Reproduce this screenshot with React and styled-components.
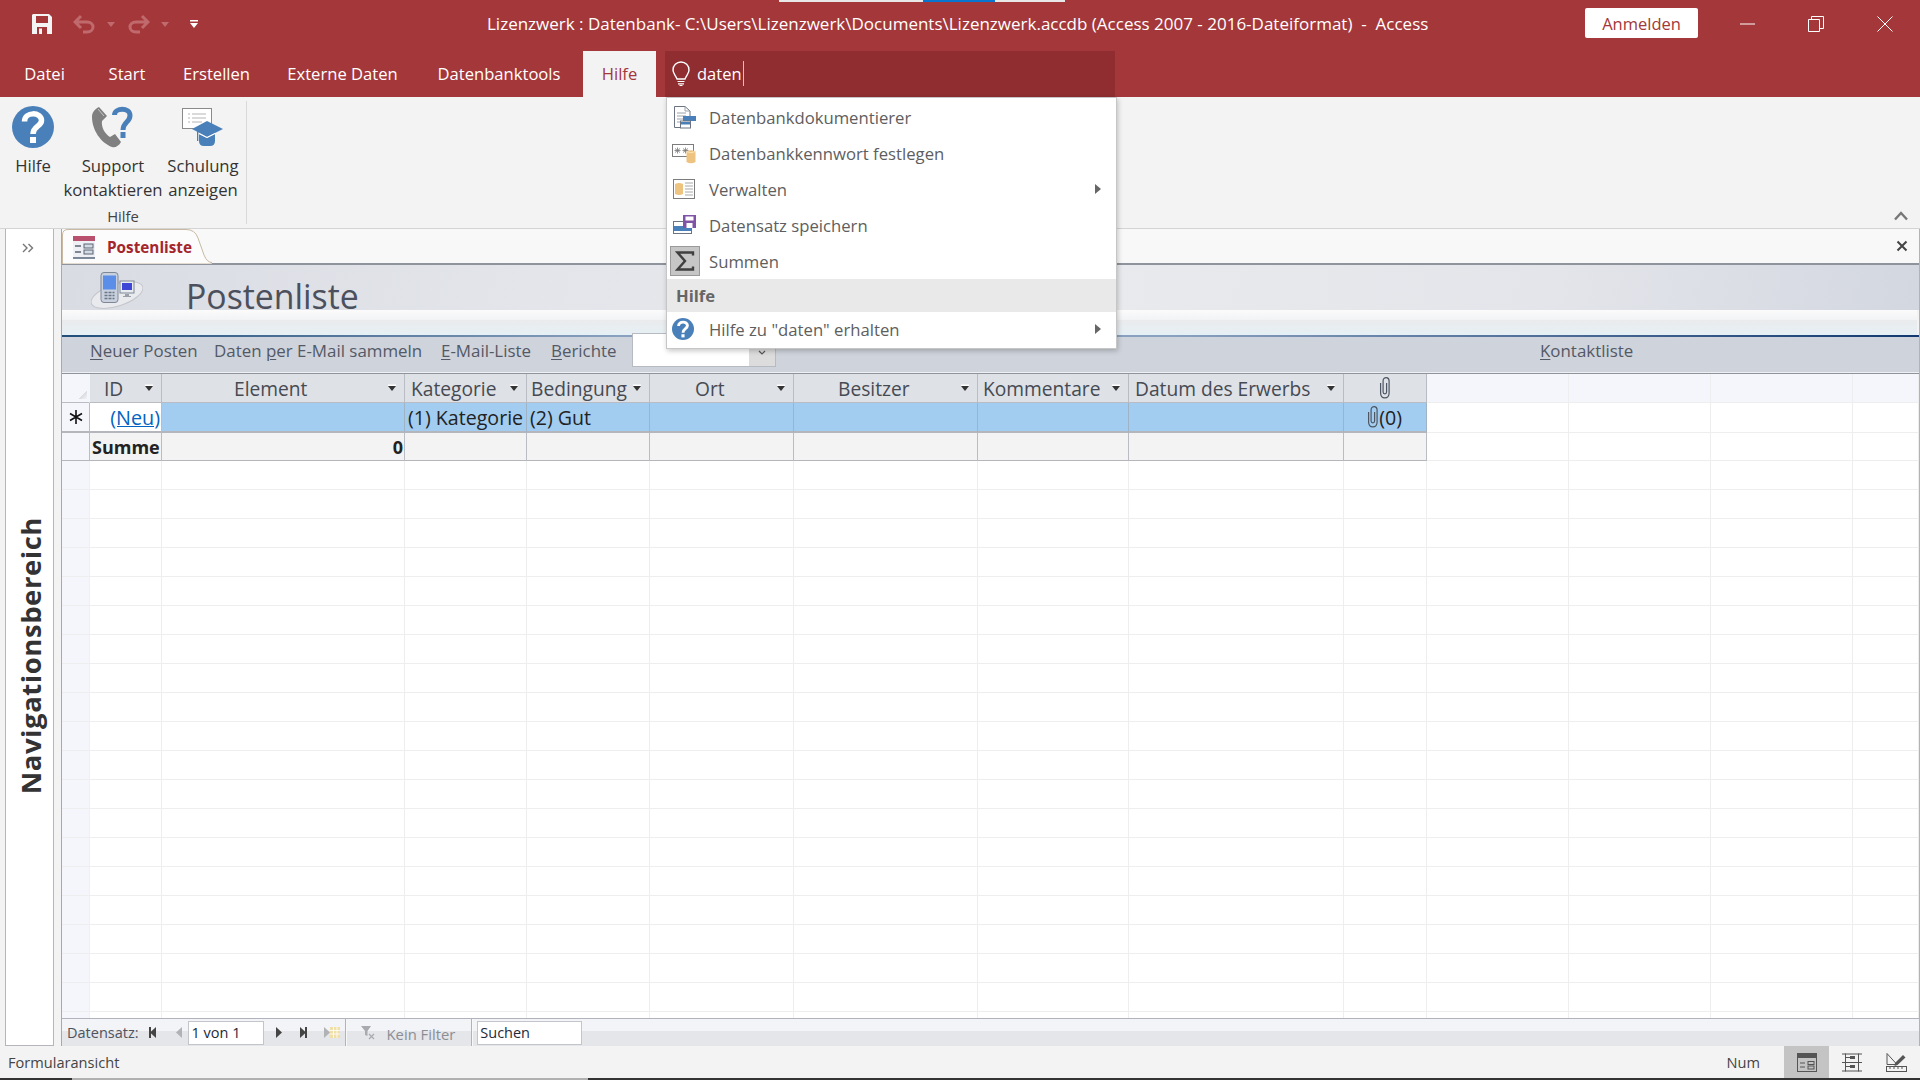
import React from "react";
import styled, { createGlobalStyle } from "styled-components";

const RED = "#a4373a";
const UI_FONT = `"Open Sans", "Noto Sans", "Liberation Sans", sans-serif`;

const GlobalStyle = createGlobalStyle`
  html, body { margin: 0; padding: 0; background: #f3f3f3; }
  * { box-sizing: border-box; }
  body { font-family: ${UI_FONT}; }
`;

const Page = styled.div`
  position: relative;
  width: 1920px;
  height: 1080px;
  overflow: hidden;
  display: flex;
  flex-direction: column;
  background: #f3f3f3;
`;

const TopStrip = styled.div`
  position: absolute;
  top: 0;
  left: 779px;
  width: 286px;
  height: 2px;
  background: linear-gradient(to right, #e8e8e8 144px, #0a74d1 144px, #0a74d1 216px, #e8e8e8 216px);
`;

/* title bar */
const TitleBar = styled.header`
  height: 48px;
  background: ${RED};
  display: flex;
  align-items: center;
  color: #fff;
  padding-left: 32px;
`;

const Qat = styled.div`
  display: flex;
  align-items: center;
  width: 455px;
  height: 100%;
`;

const Title = styled.div`
  width: 943px;
  margin-top: -2px;
  font-size: 17px;
  white-space: pre;
  color: #fff;
`;

const SignIn = styled.button`
  margin-left: 155px;
  margin-top: -2px;
  width: 113px;
  height: 30px;
  border: 0;
  border-radius: 2px;
  background: #fff;
  color: ${RED};
  font: 16.5px ${UI_FONT};
`;

const WinButton = styled.div`
  width: 68px;
  display: flex;
  justify-content: center;
  margin-left: ${p => p.$ml || 0}px;
`;

/* tabs */
const TabRow = styled.nav`
  height: 49px;
  background: ${RED};
  display: flex;
  align-items: flex-end;
  padding-left: 2px;
`;

const Tab = styled.div`
  width: ${p => p.$w}px;
  height: 46px;
  margin-left: ${p => p.$ml || 0}px;
  padding-bottom: 2px;
  display: flex;
  align-items: center;
  justify-content: center;
  font-size: 16.6px;
  color: ${p => (p.$active ? RED : "#fff")};
  background: ${p => (p.$active ? "#f3f3f3" : "transparent")};
`;

const SearchBox = styled.div`
  width: 450px;
  height: 46px;
  margin-left: 9px;
  background: #8f2d30;
  display: flex;
  align-items: center;
  padding: 0 0 2px 7px;
  color: #fff;
  font-size: 16.5px;
  gap: 7px;
`;

const Caret = styled.span`
  display: inline-block;
  width: 1px;
  height: 25px;
  background: #a9d4de;
  margin-left: -6px;
`;

/* ribbon */
const Ribbon = styled.section`
  height: 132px;
  background: #f3f3f3;
  border-bottom: 1px solid #d4d4d4;
  padding-top: 4px;
  position: relative;
`;

const RibbonGroup = styled.div`
  width: 247px;
  height: 123px;
  padding-top: 5px;
  border-right: 1px solid #d9d9d9;
  display: flex;
  flex-direction: column;
`;

const ButtonRow = styled.div`
  height: 102px;
  display: flex;
`;

const RibbonButton = styled.div`
  width: ${p => p.$w}px;
  display: flex;
  flex-direction: column;
  align-items: center;
  font-size: 16.7px;
  line-height: 24px;
  color: #333;
  text-align: center;
  white-space: nowrap;
`;

const IconSlot = styled.div`
  height: 42px;
  margin-bottom: 6px;
  display: flex;
  justify-content: center;
`;

const GroupLabel = styled.div`
  line-height: 16px;
  font-size: 14.8px;
  color: #444;
  text-align: center;
`;

const Collapse = styled.svg`
  position: absolute;
  right: 12px;
  bottom: 7px;
`;

/* search results menu */
const Menu = styled.div`
  position: absolute;
  left: 666px;
  top: 97px;
  width: 451px;
  height: 252px;
  background: #fff;
  border: 1px solid #c6c6c6;
  box-shadow: 1px 2px 5px rgba(0, 0, 0, 0.22);
  padding-top: 2px;
  display: flex;
  flex-direction: column;
  z-index: 5;
`;

const MenuItem = styled.div`
  height: 36px;
  flex: none;
  display: flex;
  align-items: center;
  padding: 0 15px 2px 5px;
  color: #5e5e5e;
  font-size: 16.7px;
`;

const MenuIcon = styled.div`
  width: 37px;
  display: flex;
  align-items: center;
`;

const SigmaBox = styled.div`
  width: 30px;
  height: 30px;
  margin-left: -2px;
  background: #c6c6c6;
  border: 1px solid #9a9a9a;
  display: flex;
  align-items: center;
  justify-content: center;
`;

const MenuArrow = styled.span`
  margin-left: auto;
  width: 0;
  height: 0;
  border-left: 6px solid #666;
  border-top: 5.5px solid transparent;
  border-bottom: 5.5px solid transparent;
`;

const MenuHeading = styled.div`
  height: 33px;
  flex: none;
  margin-top: -1px;
  background: #e9e9e9;
  display: flex;
  align-items: center;
  padding-left: 9px;
  font-size: 16.6px;
  font-weight: 700;
  color: #666;
`;

/* workspace */
const Workspace = styled.main`
  flex: 1;
  min-height: 0;
  display: flex;
`;

const NavPane = styled.aside`
  width: 49px;
  margin-left: 5px;
  background: #fff;
  border: 1px solid #b4b6bc;
  border-top: 0;
  display: flex;
  flex-direction: column;
  align-items: center;
  padding-top: 14px;
`;

const NavChevron = styled.svg`
  margin-right: 3px;
  flex: none;
`;

const NavLabel = styled.div`
  writing-mode: vertical-rl;
  transform: rotate(180deg);
  margin-top: 264px;
  margin-left: 2px;
  font-size: 27.5px;
  font-weight: 700;
  color: #333;
  white-space: nowrap;
  letter-spacing: 0.55px;
`;

const DocArea = styled.div`
  flex: 1;
  min-width: 0;
  margin-left: 7px;
  border-left: 1px solid #a6a9b1;
  border-right: 1px solid #b0b3bb;
  display: flex;
  flex-direction: column;
`;

const DocTabs = styled.div`
  height: 36px;
  flex: none;
  background: #f8f8f8;
  border-bottom: 2px solid #8f939b;
  display: flex;
  align-items: center;
  justify-content: space-between;
  padding-right: 11px;
`;

const DocTab = styled.div`
  position: relative;
  width: 150px;
  height: 36px;
  display: flex;
  align-items: center;
  padding: 2px 0 0 10px;
  gap: 11px;
  color: #a4262c;
  font-size: 15.3px;
  font-weight: 700;
  z-index: 1;
  svg.shape {
    position: absolute;
    left: 0;
    top: 0;
    z-index: -1;
  }
`;

const FormHeader = styled.div`
  height: 45px;
  flex: none;
  overflow: hidden;
  background: linear-gradient(100deg, #d9dce3 0%, #e3e5ea 25%, #e9eaed 55%, #e3e5ea 80%, #d3d7e0 100%);
  display: flex;
  padding: 7px 0 0 29px;
`;

const FormTitle = styled.div`
  margin-left: 43px;
  margin-top: -2px;
  font-size: 33.8px;
  line-height: 52px;
  color: #4b505c;
`;

const Band = styled.div`
  height: 25px;
  flex: none;
  margin-right: 2px;
  background: linear-gradient(#fbfbfc 0%, #f2f3f4 40%, #eaebed 41%, #e7eff3 85%, #e4f1f6 100%);
`;

const BlueRule = styled.div`
  height: 2px;
  flex: none;
  background: linear-gradient(to right, #1f4e79 0%, #8aa0bf 30%, #8aa0bf 60%, #123a70 100%);
`;

const FormMenu = styled.div`
  height: 36px;
  flex: none;
  background: #cfd3db;
  border-bottom: 1px solid #eef0f3;
  display: flex;
  align-items: center;
  position: relative;
`;

const MenuLink = styled.span`
  position: absolute;
  left: ${p => p.$x}px;
  margin-top: -8px;
  font-size: 16.9px;
  color: #535966;
  white-space: nowrap;
  u { text-underline-offset: 2px; }
`;

const Combo = styled.div`
  position: absolute;
  left: 570px;
  top: -4px;
  width: 144px;
  height: 34px;
  background: #fff;
  border: 1px solid #b7bac1;
  display: flex;
  justify-content: flex-end;
`;

const ComboButton = styled.div`
  width: 26px;
  background: #dcdcdc;
  display: flex;
  align-items: flex-end;
  justify-content: center;
  padding-bottom: 11px;
`;

/* datasheet */
const COLS = "28px 72px 243px 122px 123px 144px 184px 151px 215px 83px 142px 142px 142px 1fr";

const Sheet = styled.div`
  flex: 1;
  min-height: 0;
  overflow: hidden;
  background: #fff;
`;

const Row = styled.div`
  display: grid;
  grid-template-columns: ${COLS};
  height: ${p => p.$h || 29}px;
`;

const HeadRow = styled(Row)`
  border-top: 1px solid #8f939b;
  background: #f4f6fc;
`;

const Cell = styled.div`
  border-right: 1px solid ${p => p.$edge || "#eeeeee"};
  border-bottom: ${p => p.$under || "1px solid #eeeeee"};
  display: flex;
  align-items: center;
  background: ${p => p.$bg || "transparent"};
  font-size: 19.6px;
  color: #222;
  white-space: nowrap;
  overflow: hidden;
  padding-left: ${p => p.$pl || 0}px;
  justify-content: ${p => p.$justify || "flex-start"};
  padding-right: ${p => p.$pr || 0}px;
`;

const HeadCell = styled(Cell).attrs({ $bg: "#dee1e6", $edge: "#b9bcc2", $under: "1px solid #b9bcc2" })`
  color: #464a52;
  font-size: 19.2px;
  padding-right: 8px;
`;

const NewCell = styled(Cell).attrs({ $bg: "#a3cdf0", $edge: "#9fb3c6", $under: "2px solid #b4b6bb" })``;

const SumCell = styled(Cell).attrs({ $bg: "#f3f3f3", $edge: "#b9bcc2", $under: "1px solid #b4b6bb" })``;

const SortArrow = styled.span`
  margin-left: auto;
  flex: none;
  width: 0;
  height: 0;
  border-left: 4.5px solid transparent;
  border-right: 4.5px solid transparent;
  border-top: 5px solid #333;
  box-shadow: 0 -1.5px 0 #fff;
`;

const SelectAll = styled.div`
  width: 100%;
  height: 100%;
  background: linear-gradient(135deg, transparent 72%, #d8dade 72%, #f2f3f5 100%);
  background-size: 16px 16px;
  background-position: 9px 9px;
  background-repeat: no-repeat;
`;

const NewLink = styled.a`
  color: #0563c1;
  text-decoration: underline;
  font-size: 19.8px;
`;

const Strong = styled.span`
  font-weight: 700;
  color: #222;
  font-size: 18px;
`;

/* record navigation */
const RecordBar = styled.div`
  height: 28px;
  flex: none;
  border-top: 1px solid #b0b3bb;
  background: linear-gradient(#f3f4f7 0 46%, #e5e6ea 46% 100%);
  display: flex;
  align-items: center;
  font-size: 14.5px;
  color: #4d535f;
  padding-left: 5px;
`;

const NavBtn = styled.svg`
  flex: none;
  margin-left: ${p => p.$ml || 0}px;
`;

const RecordBox = styled.div`
  width: ${p => p.$w}px;
  height: 24px;
  margin-left: ${p => p.$ml || 0}px;
  background: #fff;
  border: 1px solid #c3c5ca;
  color: #1c2a3a;
  font-size: 14.5px;
  line-height: 22px;
  padding-left: ${p => p.$pl || 2}px;
  flex: none;
`;

const BarSep = styled.span`
  width: 2px;
  height: 100%;
  margin-left: ${p => p.$ml}px;
  background: #f8f8f8;
  border-left: 1px solid #b0b3bb;
  flex: none;
`;

const NoFilter = styled.span`
  color: #8b8e95;
  margin-left: 11px;
  font-size: 14.8px;
  padding-top: 3px;
`;

/* status bar */
const StatusBar = styled.footer`
  height: 32px;
  flex: none;
  background: #f3f3f3;
  display: flex;
  align-items: center;
  padding-left: 8px;
  font-size: 14.6px;
  color: #444;
`;

const ViewGroup = styled.div`
  margin-left: auto;
  padding-right: 1px;
  display: flex;
  align-items: center;
  height: 100%;
`;

const NumLabel = styled.span`
  margin-right: 24px;
`;

const ViewButton = styled.div`
  width: 45px;
  height: 100%;
  display: flex;
  align-items: center;
  justify-content: center;
  background: ${p => (p.$active ? "#c4c4c4" : "transparent")};
`;

const BottomEdge = styled.div`
  height: 2px;
  flex: none;
  background: linear-gradient(to right, #333 72px, #b0b0b0 72px, #b0b0b0 588px, #333 588px);
`;

const HelpIcon = ({ size }) => (
  <svg width={size} height={size} viewBox="0 0 42 42">
    <circle cx="21" cy="21" r="21" fill="#4a80b9" />
    <path d="M12.5 15.5C12.5 5.5 29.5 5.5 29.5 14.5C29.5 20.5 21 20 21 28" fill="none" stroke="#fff" strokeWidth="5.5" />
    <rect x="18" y="31" width="6" height="6" fill="#fff" />
  </svg>
);

const PhoneIcon = () => (
  <svg width="44" height="42" viewBox="0 0 44 42">
    <path d="M8 1L16 10L11 15C10 21 14 28 19 31L24 28L30 36C28 40 24 42 21 41C10 37 1 24 1 11C1 6 4 3 8 1Z" fill="#808080" />
    <path d="M7 3L13 10" stroke="#c8c8c8" strokeWidth="1" />
    <path d="M23.5 9C23.5 1.5 39 1 39 9.5C39 16.5 32 15.5 32 24" fill="none" stroke="#4a80b9" strokeWidth="5" />
    <rect x="29.5" y="26" width="5" height="6" fill="#4a80b9" />
  </svg>
);

const TrainingIcon = () => (
  <svg width="42" height="40" viewBox="0 0 42 40" style={{ marginTop: 2 }}>
    <rect x="0.5" y="0.5" width="29" height="20" fill="#fff" stroke="#8a8a8a" />
    <path d="M6 6h2M10 6h14M6 10h2M10 10h14M6 14h2M10 14h10" stroke="#b5b5b5" strokeWidth="1" />
    <path d="M25 13L41 21L25 29L10 21Z" fill="#4a80b9" />
    <path d="M17 26L25 30L33 26V33Q33 38 28 38H22Q17 38 17 33Z" fill="#4a80b9" />
    <path d="M17 25.5L25 29.5L33 25.5" fill="none" stroke="#fff" strokeWidth="1" />
    <rect x="15" y="21" width="1.3" height="12" fill="#4a80b9" />
  </svg>
);

const BulbIcon = () => (
  <svg width="18" height="25" viewBox="0 0 18 25">
    <path d="M9 1C4.5 1 1 4.5 1 9C1 12.5 3.5 14 5 18H13C14.5 14 17 12.5 17 9C17 4.5 13.5 1 9 1Z" fill="none" stroke="#fff" strokeWidth="1.4" />
    <path d="M5.5 20.5H12.5M6 22.8H12M7.5 24.5H10.5" stroke="#fff" strokeWidth="1.2" />
  </svg>
);

const DocumenterIcon = () => (
  <svg width="24" height="24" viewBox="0 0 24 24">
    <path d="M2.5 1.5H13L18 6V22.5H2.5Z" fill="#fff" stroke="#6b7480" />
    <path d="M13 1.5V6H18M5 8h9M5 11h9M5 14h6M5 17h5" fill="none" stroke="#9aa2ad" />
    <rect x="11" y="11" width="13" height="5" fill="#4a80b9" />
    <rect x="8.5" y="16" width="10" height="7" fill="#fff" stroke="#6b7480" />
    <rect x="9" y="17" width="9" height="2.5" fill="#4a80b9" />
  </svg>
);

const PasswordIcon = () => (
  <svg width="24" height="24" viewBox="0 0 24 24">
    <rect x="0.5" y="3.5" width="21" height="12" fill="#fff" stroke="#7c7c7c" />
    <path d="M3 7.5l5 4M8 7.5l-5 4M5.5 6.5v6M2.5 9.5h6M11 7.5l5 4M16 7.5l-5 4M13.5 6.5v6M10.5 9.5h6" stroke="#777" strokeWidth="0.8" />
    <path d="M14.5 10.5Q19 8 23.5 10.5V21Q19 23.5 14.5 21Z" fill="#eec27f" />
    <path d="M14.5 10.5Q19 13 23.5 10.5" fill="none" stroke="#fbe3b9" />
  </svg>
);

const ManageIcon = () => (
  <svg width="24" height="24" viewBox="0 0 24 24">
    <rect x="1.5" y="2.5" width="21" height="19" fill="#fff" stroke="#7c7c7c" />
    <path d="M3 7Q7 5 11 7V17Q7 19 3 17Z" fill="#eec27f" />
    <path d="M13 6h8M13 9h8M13 12h8M13 15h8M13 18h8" stroke="#a8a8a8" />
  </svg>
);

const SaveRecordIcon = () => (
  <svg width="24" height="24" viewBox="0 0 24 24">
    <rect x="1.5" y="8.5" width="18" height="12" fill="#fff" stroke="#6b7480" />
    <rect x="2" y="13" width="17" height="5" fill="#4a80b9" />
    <rect x="11" y="2" width="13" height="13" fill="#8153a7" />
    <rect x="13.5" y="3.5" width="8" height="4" fill="#fff" />
    <rect x="14.5" y="10" width="6" height="5" fill="#fff" />
  </svg>
);

const FormIcon = () => (
  <svg width="24" height="24" viewBox="0 0 24 24" style={{ flex: "none" }}>
    <rect x="1" y="1" width="22" height="22" fill="#eef0f5" />
    <rect x="1" y="1" width="22" height="5" fill="#b8506e" />
    <path d="M1 23H23" stroke="#4a5a72" strokeWidth="1.4" />
    <path d="M3 11h6M3 17h6" stroke="#5a6472" strokeWidth="1.3" />
    <rect x="12" y="9" width="9" height="4" fill="#d5dbe6" stroke="#5a6472" />
    <rect x="12" y="15" width="9" height="4" fill="#d5dbe6" stroke="#5a6472" />
  </svg>
);

const DevicesIcon = () => (
  <svg width="52" height="38" viewBox="0 0 52 38" style={{ flex: "none" }}>
    <ellipse cx="26" cy="23" rx="27" ry="11" fill="#e9eaee" stroke="#c4c6cc" transform="rotate(-18 26 23)" />
    <rect x="10" y="0.5" width="17" height="30" rx="3" fill="#c9d1de" stroke="#7d8796" />
    <rect x="12" y="3.5" width="13" height="14" fill="#5b8ee8" />
    <path d="M13.5 20.5h3M17.5 20.5h3M21.5 20.5h2M13.5 23.5h3M17.5 23.5h3M21.5 23.5h2M13.5 26.5h3M17.5 26.5h3M21.5 26.5h2" stroke="#6b7686" strokeWidth="1.6" />
    <rect x="29" y="9" width="14" height="12" fill="#e8ebf0" stroke="#7d8796" />
    <rect x="31" y="11" width="10" height="7" fill="#3e46d6" />
    <path d="M34 22h4v2h2v1h-8v-1h2Z" fill="#9aa0aa" />
  </svg>
);

const Triangle = ({ dir, color }) => (
  <path d={dir === "left" ? "M8 1V12L2 6.5Z" : "M3 1V12L9 6.5Z"} fill={color} />
);

const Clip = ({ h = 22 }) => (
  <svg width={h * 0.6} height={h} viewBox="0 0 12 22" style={{ flex: "none" }}>
    <path d="M2 6V16C2 22.5 10.5 22.5 10.5 16V4C10.5 -0.5 4.5 -0.5 4.5 4V15C4.5 17.5 8 17.5 8 15V6" fill="none" stroke="#4d5662" strokeWidth="1.2" />
  </svg>
);

const columns = [
  { label: "ID", pl: 14 },
  { label: "Element", pl: 72 },
  { label: "Kategorie", pl: 6 },
  { label: "Bedingung", pl: 4 },
  { label: "Ort", pl: 45 },
  { label: "Besitzer", pl: 44 },
  { label: "Kommentare", pl: 5 },
  { label: "Datum des Erwerbs", pl: 6 }
];

const menuLinks = [
  { x: 28, before: "", key: "N", after: "euer Posten" },
  { x: 152, before: "Daten ", key: "p", after: "er E-Mail sammeln" },
  { x: 379, before: "", key: "E", after: "-Mail-Liste" },
  { x: 489, before: "", key: "B", after: "erichte" },
  { x: 1478, before: "", key: "K", after: "ontaktliste" }
];

const emptyRows = Array.from({ length: 20 });

const Filler = () => (
  <>
    <Cell />
    <Cell />
    <Cell />
    <Cell />
  </>
);

export default function App() {
  return (
    <Page>
      <GlobalStyle />
      <TopStrip />

      <TitleBar>
        <Qat>
          <svg width="20" height="20" viewBox="0 0 20 20">
            <path d="M1 0H17L20 3V20H0V1Z" fill="#f4f4f4" />
            <rect x="4" y="2" width="12" height="7" fill={RED} />
            <rect x="5" y="13" width="10" height="7" fill={RED} />
            <rect x="7" y="14.5" width="3" height="5.5" fill="#f4f4f4" />
          </svg>
          <svg width="22" height="20" viewBox="0 0 22 20" style={{ marginLeft: 21 }}>
            <path d="M8 2L2 8L8 14M2 8H14C22 8 22 18 14 18H10" fill="none" stroke="#c06a6d" strokeWidth="3" />
          </svg>
          <svg width="8" height="5" viewBox="0 0 8 5" style={{ marginLeft: 12 }}>
            <path d="M0 0H8L4 5Z" fill="#c06a6d" />
          </svg>
          <svg width="22" height="20" viewBox="0 0 22 20" style={{ marginLeft: 13 }}>
            <path d="M14 2L20 8L14 14M20 8H8C0 8 0 18 8 18H12" fill="none" stroke="#c06a6d" strokeWidth="3" />
          </svg>
          <svg width="8" height="5" viewBox="0 0 8 5" style={{ marginLeft: 11 }}>
            <path d="M0 0H8L4 5Z" fill="#c06a6d" />
          </svg>
          <svg width="8" height="8" viewBox="0 0 8 8" style={{ marginLeft: 21 }}>
            <path d="M0 0H8V1.5H0ZM0 3H8L4 8Z" fill="#fff" />
          </svg>
        </Qat>
        <Title>{"Lizenzwerk : Datenbank- C:\\Users\\Lizenzwerk\\Documents\\Lizenzwerk.accdb (Access 2007 - 2016-Dateiformat)  -  Access"}</Title>
        <SignIn>Anmelden</SignIn>
        <WinButton $ml="16">
          <svg width="16" height="2" viewBox="0 0 16 2"><path d="M0 1H15" stroke="#fff" /></svg>
        </WinButton>
        <WinButton>
          <svg width="16" height="16" viewBox="0 0 16 16">
            <path d="M0.5 3.5H11.5V15.5H0.5ZM3.5 3.5V0.5H15.5V12.5H11.5" fill="none" stroke="#fff" />
          </svg>
        </WinButton>
        <WinButton $ml="1">
          <svg width="16" height="16" viewBox="0 0 16 16"><path d="M0.5 0.5L15.5 15.5M15.5 0.5L0.5 15.5" stroke="#fff" /></svg>
        </WinButton>
      </TitleBar>

      <TabRow>
        <Tab $w="85">Datei</Tab>
        <Tab $w="80">Start</Tab>
        <Tab $w="99">Erstellen</Tab>
        <Tab $w="153">Externe Daten</Tab>
        <Tab $w="160">Datenbanktools</Tab>
        <Tab $w="73" $ml="4" $active>Hilfe</Tab>
        <SearchBox>
          <BulbIcon />
          daten
          <Caret />
        </SearchBox>
      </TabRow>

      <Ribbon>
        <RibbonGroup>
          <ButtonRow>
            <RibbonButton $w="66">
              <IconSlot><HelpIcon size={42} /></IconSlot>
              Hilfe
            </RibbonButton>
            <RibbonButton $w="94">
              <IconSlot><PhoneIcon /></IconSlot>
              Support
              <br />
              kontaktieren
            </RibbonButton>
            <RibbonButton $w="86">
              <IconSlot><TrainingIcon /></IconSlot>
              Schulung
              <br />
              anzeigen
            </RibbonButton>
          </ButtonRow>
          <GroupLabel>Hilfe</GroupLabel>
        </RibbonGroup>
        <Collapse width="14" height="10" viewBox="0 0 14 10">
          <path d="M1 8.5L7 2L13 8.5" fill="none" stroke="#777" strokeWidth="2.4" />
        </Collapse>
      </Ribbon>

      <Menu>
        <MenuItem>
          <MenuIcon><DocumenterIcon /></MenuIcon>
          Datenbankdokumentierer
        </MenuItem>
        <MenuItem>
          <MenuIcon><PasswordIcon /></MenuIcon>
          Datenbankkennwort festlegen
        </MenuItem>
        <MenuItem>
          <MenuIcon><ManageIcon /></MenuIcon>
          Verwalten
          <MenuArrow />
        </MenuItem>
        <MenuItem>
          <MenuIcon><SaveRecordIcon /></MenuIcon>
          Datensatz speichern
        </MenuItem>
        <MenuItem>
          <MenuIcon>
            <SigmaBox>
              <svg width="20" height="20" viewBox="0 0 20 20">
                <path d="M18 4.5V1.5H2.5L10 10L2.5 18.5H18V15.5" fill="none" stroke="#3f3f3f" strokeWidth="2.4" />
              </svg>
            </SigmaBox>
          </MenuIcon>
          Summen
        </MenuItem>
        <MenuHeading>Hilfe</MenuHeading>
        <MenuItem>
          <MenuIcon><HelpIcon size={22} /></MenuIcon>
          Hilfe zu "daten" erhalten
          <MenuArrow />
        </MenuItem>
      </Menu>

      <Workspace>
        <NavPane>
          <NavChevron width="12" height="10" viewBox="0 0 12 10">
            <path d="M1 1L5 5L1 9M6.5 1L10.5 5L6.5 9" fill="none" stroke="#777" strokeWidth="1.4" />
          </NavChevron>
          <NavLabel>Navigationsbereich</NavLabel>
        </NavPane>

        <DocArea>
          <DocTabs>
            <DocTab>
              <svg className="shape" width="150" height="36" viewBox="0 0 150 36">
                <path d="M0.5 36V7Q0.5 1.5 6 1.5H124Q133 1.5 136 10L142 27Q145 34.5 150 34.5V36Z" fill="#fcfcfc" stroke="#c8b9a0" />
              </svg>
              <FormIcon />
              Postenliste
            </DocTab>
            <svg width="12" height="12" viewBox="0 0 12 12">
              <path d="M1.5 1.5L10.5 10.5M10.5 1.5L1.5 10.5" stroke="#444" strokeWidth="2" />
            </svg>
          </DocTabs>

          <FormHeader>
            <DevicesIcon />
            <FormTitle>Postenliste</FormTitle>
          </FormHeader>
          <Band />
          <BlueRule />

          <FormMenu>
            {menuLinks.map(link => (
              <MenuLink key={link.x} $x={link.x}>
                {link.before}
                <u>{link.key}</u>
                {link.after}
              </MenuLink>
            ))}
            <Combo>
              <ComboButton>
                <svg width="8" height="5" viewBox="0 0 8 5"><path d="M1 1L4 4L7 1" fill="none" stroke="#555" strokeWidth="1.2" /></svg>
              </ComboButton>
            </Combo>
          </FormMenu>

          <Sheet>
            <HeadRow $h="30">
              <Cell $bg="#f4f6fc" $edge="#f4f6fc" $under="1px solid #b9bcc2"><SelectAll /></Cell>
              {columns.map(col => (
                <HeadCell key={col.label} $pl={col.pl}>
                  {col.label}
                  <SortArrow />
                </HeadCell>
              ))}
              <HeadCell $justify="center" $pl="8"><Clip /></HeadCell>
              <Filler />
            </HeadRow>

            <Row $h="30">
              <Cell $justify="center" $bg="#f4f6fc" $edge="#b9bcc2" $under="2px solid #b4b6bb">
                <svg width="14" height="14" viewBox="0 0 14 14">
                  <path d="M7 0V14M1 3.5L13 10.5M13 3.5L1 10.5" stroke="#111" strokeWidth="1.6" />
                </svg>
              </Cell>
              <Cell $bg="#fff" $edge="#b9bcc2" $under="2px solid #b4b6bb" $justify="flex-end" $pr="1"><NewLink>(Neu)</NewLink></Cell>
              <NewCell />
              <NewCell $pl="3">(1) Kategorie</NewCell>
              <NewCell $pl="3">(2) Gut</NewCell>
              <NewCell />
              <NewCell />
              <NewCell />
              <NewCell />
              <NewCell $pl="22"><Clip />(0)</NewCell>
              <Filler />
            </Row>

            <Row $h="28">
              <Cell $bg="#f4f6fc" $edge="#b9bcc2" $under="1px solid #b4b6bb" />
              <SumCell $pl="2"><Strong>Summe</Strong></SumCell>
              <SumCell $justify="flex-end" $pr="1"><Strong>0</Strong></SumCell>
              <SumCell />
              <SumCell />
              <SumCell />
              <SumCell />
              <SumCell />
              <SumCell />
              <SumCell />
              <Filler />
            </Row>

            {emptyRows.map((_, i) => (
              <Row key={i}>
                <Cell $bg="#f4f6fc" $edge="#eef0f6" />
                <Cell />
                <Cell />
                <Cell />
                <Cell />
                <Cell />
                <Cell />
                <Cell />
                <Cell />
                <Cell />
                <Filler />
              </Row>
            ))}
          </Sheet>

          <RecordBar>
            Datensatz:
            <NavBtn width="11" height="13" viewBox="0 0 11 13" $ml="9">
              <path d="M1 1H3V12H1Z" fill="#444" />
              <Triangle dir="left" color="#444" />
            </NavBtn>
            <NavBtn width="10" height="13" viewBox="0 0 10 13" $ml="15">
              <Triangle dir="left" color="#b0b2b6" />
            </NavBtn>
            <RecordBox $w="76" $ml="4" $pl="3">1 von 1</RecordBox>
            <NavBtn width="10" height="13" viewBox="0 0 10 13" $ml="9">
              <Triangle dir="right" color="#444" />
            </NavBtn>
            <NavBtn width="11" height="13" viewBox="0 0 11 13" $ml="14">
              <Triangle dir="right" color="#444" />
              <path d="M8 1H10V12H8Z" fill="#444" />
            </NavBtn>
            <NavBtn width="20" height="13" viewBox="0 0 20 13" $ml="13">
              <Triangle dir="right" color="#b0b2b6" />
              <path d="M9 1H19V12H9Z" fill="#f0dfa8" />
              <path d="M9 4.5H19M9 8H19M12.5 1V12M16 1V12" stroke="#fff" strokeWidth="0.8" />
            </NavBtn>
            <BarSep $ml="4" />
            <NavBtn width="16" height="15" viewBox="0 0 16 15" $ml="13">
              <path d="M1 1H11L7.5 6V11L5 10V6Z" fill="#a8aab0" />
              <path d="M9 9L14 14M14 9L9 14" stroke="#a8aab0" strokeWidth="1.2" />
            </NavBtn>
            <NoFilter>Kein Filter</NoFilter>
            <BarSep $ml="16" />
            <RecordBox $w="105" $ml="4">Suchen</RecordBox>
          </RecordBar>
        </DocArea>
      </Workspace>

      <StatusBar>
        Formularansicht
        <ViewGroup>
          <NumLabel>Num</NumLabel>
          <ViewButton $active>
            <svg width="20" height="19" viewBox="0 0 20 19">
              <rect x="0.5" y="0.5" width="19" height="18" fill="none" stroke="#555" />
              <rect x="0" y="0" width="20" height="5" fill="#555" />
              <path d="M3 10H8M3 14H8" stroke="#555" />
              <rect x="11" y="8.5" width="6" height="3" fill="none" stroke="#555" />
              <rect x="11" y="13" width="6" height="3" fill="none" stroke="#555" />
            </svg>
          </ViewButton>
          <ViewButton>
            <svg width="20" height="19" viewBox="0 0 20 19">
              <path d="M3.5 0.5V18.5M16.5 0.5V18.5M0 1H20M0 18H20M0 9.5H20" stroke="#555" fill="none" />
              <rect x="8" y="3" width="5" height="3" fill="#555" />
              <rect x="8" y="12" width="5" height="3" fill="#555" />
              <path d="M3.5 4.5H8M3.5 13.5H8" stroke="#555" />
            </svg>
          </ViewButton>
          <ViewButton>
            <svg width="21" height="19" viewBox="0 0 21 19">
              <path d="M1 0.5V11.5H11Z" fill="none" stroke="#555" />
              <path d="M9 10L17 2L19.5 4.5L11.5 12L8.5 13Z" fill="#555" />
              <rect x="0.5" y="13.5" width="20" height="5" fill="none" stroke="#555" />
              <path d="M4 14V16M8 14V16M12 14V16M16 14V16" stroke="#555" />
            </svg>
          </ViewButton>
        </ViewGroup>
      </StatusBar>
      <BottomEdge />
    </Page>
  );
}
